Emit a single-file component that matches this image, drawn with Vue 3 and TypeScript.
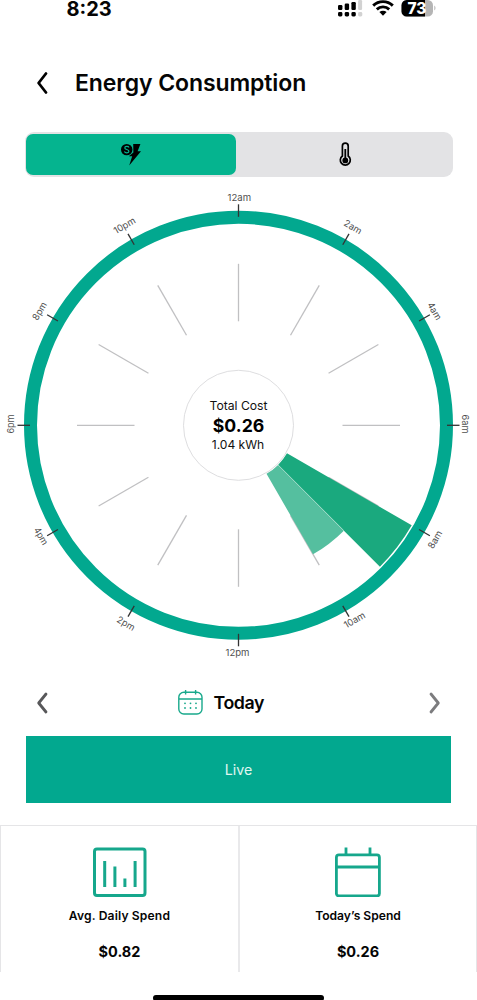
<script setup lang="ts">
interface HourLabel {
  text: string
  x: number
  y: number
  angle: number
  width: number
}

const CX = 238.5
const CY = 425.3

const labels: HourLabel[] = [
  { text: '12am', x: 239.3, y: 197.5, angle: 0, width: 23.5 },
  { text: '2am', x: 353, y: 227, angle: 30, width: 19 },
  { text: '4am', x: 434.5, y: 311, angle: 60, width: 19 },
  { text: '6am', x: 465.5, y: 424, angle: 90, width: 19 },
  { text: '8am', x: 435, y: 539.5, angle: -60, width: 19 },
  { text: '10am', x: 354.5, y: 620, angle: -30, width: 23 },
  { text: '12pm', x: 237.5, y: 652.5, angle: 0, width: 24 },
  { text: '2pm', x: 126, y: 623.5, angle: 30, width: 19 },
  { text: '4pm', x: 41, y: 536, angle: 60, width: 19 },
  { text: '6pm', x: 11, y: 424, angle: -90, width: 19 },
  { text: '8pm', x: 39.5, y: 311, angle: -60, width: 19 },
  { text: '10pm', x: 124.5, y: 225.5, angle: -30, width: 23.5 },
]

const spokes: number[] = Array.from({ length: 12 }, (_, i) => i * 30)

function point(r: number, deg: number): string {
  const a = (deg * Math.PI) / 180
  return `${(CX + r * Math.cos(a)).toFixed(2)} ${(CY + r * Math.sin(a)).toFixed(2)}`
}

function wedge(r0: number, r1: number, a0: number, a1: number): string {
  return `M${point(r0, a0)}L${point(r1, a0)}A${r1} ${r1} 0 0 1 ${point(r1, a1)}L${point(r0, a1)}A${r0} ${r0} 0 0 0 ${point(r0, a0)}Z`
}
</script>

<template>
  <div class="screen">
    <div class="status">
      <span class="time">8:23</span>
      <div class="indicators">
        <svg class="signal" width="25" height="17" viewBox="0 0 25 17">
          <g fill="#000">
            <rect x="0" y="5" width="4.4" height="5" rx="1.2" />
            <rect x="6.7" y="3.5" width="4.4" height="6.5" rx="1.2" />
            <rect x="13.4" y="2" width="4.4" height="8" rx="1.2" />
            <rect x="0" y="12" width="4.4" height="4.4" rx="1.4" />
            <rect x="6.7" y="12" width="4.4" height="4.4" rx="1.4" />
            <rect x="13.4" y="12" width="4.4" height="4.4" rx="1.4" />
          </g>
          <g fill="#d2d2d2">
            <rect x="20.1" y="0" width="4" height="10" rx="1.2" />
            <rect x="20.1" y="12" width="4.2" height="4.4" rx="1.4" />
          </g>
        </svg>
        <svg class="wifi" width="22" height="16" viewBox="0 0 22 16">
          <g fill="none" stroke="#000" stroke-width="2.9">
            <path d="M1.2 5.6A14 14 0 0 1 20.8 5.6" />
            <path d="M4.8 9.4A9 9 0 0 1 17.2 9.4" />
          </g>
          <path d="M7.4 12.1A5.2 5.2 0 0 1 14.6 12.1L11 15.8Z" />
        </svg>
        <svg class="battery" width="36" height="18" viewBox="0 0 36 18">
          <rect x="0.5" y="0" width="31.5" height="16.6" rx="5.2" fill="#b5b5b5" />
          <path d="M5.7 0H24V16.6H5.7A5.2 5.2 0 0 1 .5 11.4V5.2A5.2 5.2 0 0 1 5.7 0Z" />
          <path d="M33.3 5.5A3.2 3.2 0 0 1 33.3 10.5Z" fill="#b5b5b5" />
          <text x="16" y="13.8" text-anchor="middle" textLength="19" lengthAdjust="spacingAndGlyphs">73</text>
        </svg>
      </div>
    </div>

    <header class="header">
      <svg class="chevron" width="12" height="24" viewBox="0 0 12 24">
        <path d="M10 2.5L2.6 12L10 21.5" fill="none" stroke="#000" stroke-width="2.8" stroke-linecap="round" stroke-linejoin="round" />
      </svg>
      <h1 class="title">Energy Consumption</h1>
    </header>

    <div class="tabs">
      <button class="tab active" aria-label="Cost">
        <svg width="20" height="23" viewBox="0 0 20 23">
          <path d="M12.2 1H19.4L16.6 8.2H20L8.2 22.4L11.2 13.2H7.8L12.4 9.6Z" />
          <circle cx="5.7" cy="6.6" r="5.7" />
          <path d="M8 4.5C7.3 2.9 3.8 3 3.8 4.9C3.8 6.9 7.9 6.1 7.9 8.3C7.9 10.3 4.2 10.3 3.4 8.6" fill="none" stroke="#05b48f" stroke-width="1.2" />
        </svg>
      </button>
      <button class="tab temperature" aria-label="Temperature">
        <svg width="13" height="25" viewBox="0 0 13 25">
          <path d="M3.4 14V4A2.9 2.9 0 0 1 9.2 4V14A5 5 0 1 1 3.4 14Z" fill="none" stroke="#000" stroke-width="1.7" />
          <circle cx="6.3" cy="18.4" r="2.9" />
          <path d="M6.3 7V18" stroke="#000" stroke-width="1.8" />
        </svg>
      </button>
    </div>

    <svg class="dial" width="477" height="490" viewBox="0 185 477 490">
      <circle :cx="CX" :cy="CY" r="208" fill="none" stroke="#02a88f" stroke-width="13" />
      <g stroke="#c0c0c2" stroke-width="1.3">
        <line v-for="a in spokes" :key="a" :x1="CX" :x2="CX" :y1="CY - 161.5" :y2="CY - 104" :transform="`rotate(${a} ${CX} ${CY})`" />
      </g>
      <path :d="wedge(56, 149, 45, 60)" fill="#55bf9f" />
      <path :d="wedge(56, 200, 30, 45)" fill="#1aa97e" />
      <path :d="`M${point(56, 45)}L${point(149, 45)}`" stroke="#bfe6d9" stroke-width=".7" />
      <g stroke="#333" stroke-width="1.3">
        <line v-for="a in spokes" :key="a" :x1="CX" :x2="CX" :y1="CY - 221" :y2="CY - 208.5" :transform="`rotate(${a} ${CX} ${CY})`" />
      </g>
      <circle :cx="CX" :cy="CY" r="55" fill="#fff" stroke="#dedee0" stroke-width="1" />
      <g class="hours">
        <text
          v-for="l in labels"
          :key="l.text"
          :x="l.x"
          :y="l.y + 3.3"
          :textLength="l.width"
          lengthAdjust="spacingAndGlyphs"
          :transform="`rotate(${l.angle} ${l.x} ${l.y})`"
        >{{ l.text }}</text>
      </g>
      <g class="total">
        <text x="238.5" y="410.3" textLength="58" lengthAdjust="spacingAndGlyphs">Total Cost</text>
        <text class="cost" x="238.5" y="431.7" textLength="51.5" lengthAdjust="spacingAndGlyphs">$0.26</text>
        <text x="238" y="449" textLength="52.5" lengthAdjust="spacingAndGlyphs">1.04 kWh</text>
      </g>
    </svg>

    <div class="period">
      <svg width="12" height="22" viewBox="0 0 12 22">
        <path d="M10 2L2.7 11L10 20" fill="none" stroke="#58585a" stroke-width="2.8" stroke-linecap="round" stroke-linejoin="round" />
      </svg>
      <div class="current">
        <svg width="25" height="25" viewBox="0 0 25 25">
          <g fill="none" stroke="#19a98c" stroke-width="1.4">
            <rect x=".8" y="2.2" width="23.2" height="21.8" rx="5" />
            <path d="M1 9H24M7.6 0V4.5M17.6 0V4.5" />
          </g>
          <g fill="#19a98c">
            <circle cx="7" cy="13.3" r=".9" /><circle cx="12.5" cy="13.3" r=".9" /><circle cx="18" cy="13.3" r=".9" />
            <circle cx="7" cy="18" r=".9" /><circle cx="12.5" cy="18" r=".9" /><circle cx="18" cy="18" r=".9" />
          </g>
        </svg>
        <span>Today</span>
      </div>
      <svg class="next" width="12" height="22" viewBox="0 0 12 22">
        <path d="M2 2L9.3 11L2 20" fill="none" stroke="#7c7c7e" stroke-width="2.8" stroke-linecap="round" stroke-linejoin="round" />
      </svg>
    </div>

    <button class="live">Live</button>

    <div class="cards">
      <section class="card">
        <svg width="54" height="50" viewBox="0 0 54 50">
          <g fill="none" stroke="#16a78c" stroke-width="3">
            <rect x="1.5" y="2" width="50.5" height="46.5" rx="2.5" />
            <path d="M11.700 14V40M21.900 19.500V40M31.900 31.500V40M42.100 14V40" />
          </g>
        </svg>
        <span class="name avg">Avg. Daily Spend</span>
        <strong class="value">$0.82</strong>
      </section>
      <section class="card">
        <svg width="46" height="50" viewBox="0 0 46 50">
          <g fill="none" stroke="#16a78c" stroke-width="2.8">
            <rect x="1.400" y="7.900" width="43" height="41" rx="2.500" />
            <path d="M1.400 20H44.400M11 .5V8M35 .5V8" />
          </g>
        </svg>
        <span class="name">Today’s Spend</span>
        <strong class="value">$0.26</strong>
      </section>
    </div>

    <div class="home"></div>
  </div>
</template>

<style scoped>
.screen {
  width: 477px;
  height: 1000px;
  box-sizing: border-box;
  display: flex;
  flex-direction: column;
  overflow: hidden;
  background: #fff;
  color: #050505;
  font-family: Inter, "Open Sans", sans-serif;
}
.status {
  height: 50px;
  flex: none;
  display: flex;
  justify-content: space-between;
  padding: 0 40.5px 0 66.5px;
}
.time {
  font-size: 20px;
  line-height: 18px;
  font-weight: 700;
}
.indicators {
  display: flex;
  align-items: flex-start;
}
.wifi { margin-left: 8.5px; }
.battery { margin-left: 7px; }
.battery text {
  font: 800 15.5px Inter, sans-serif;
  fill: #fff;
}
.header {
  height: 66px;
  flex: none;
  display: flex;
  align-items: center;
  padding-left: 36px;
}
.title {
  margin: 0 0 0 27px;
  font-size: 23px;
  line-height: 30px;
  font-weight: 600;
  letter-spacing: -0.1px;
}
.tabs {
  display: flex;
  flex: none;
  box-sizing: border-box;
  height: 45.5px;
  margin: 15.5px 24px 0 24.5px;
  padding: 2px 1.5px;
  border-radius: 9px;
  background: #e3e3e5;
}
.tab {
  flex: 1;
  display: flex;
  align-items: center;
  justify-content: center;
  border: 0;
  padding: 0;
  border-radius: 7px;
  background: transparent;
}
.tab.active {
  flex: 0 0 210px;
  background: #05b48f;
}
.tab.temperature { padding-left: 4px; }
.dial {
  flex: none;
  margin-top: 8px;
  display: block;
}
.hours text {
  font-size: 9.4px;
  text-anchor: middle;
  fill: #505050;
}
.total text {
  font-size: 12.3px;
  text-anchor: middle;
  fill: #111;
}
.total text.cost {
  font-size: 17.5px;
  font-weight: 700;
  fill: #000;
}
.period {
  height: 55px;
  flex: none;
  display: flex;
  align-items: center;
  padding: 0 36px;
}
.current {
  display: flex;
  align-items: center;
  gap: 11px;
  margin-left: 129.5px;
  font-size: 17.8px;
  font-weight: 600;
  letter-spacing: -0.45px;
}
.next { margin-left: auto; }
.live {
  flex: none;
  height: 66.5px;
  margin: 6px 26px 0;
  border: 0;
  padding: 0;
  background: #02a88f;
  color: #e0f7f1;
  font: 400 14.2px Inter, sans-serif;
}
.cards {
  flex: none;
  height: 147px;
  box-sizing: border-box;
  margin-top: 22.5px;
  display: grid;
  grid-template-columns: 239px 1fr;
  border: 1px solid #e5e5e7;
  border-bottom: 0;
}
.card {
  display: flex;
  flex-direction: column;
  align-items: center;
  padding-top: 21px;
}
.card:first-child { border-right: 2px solid #e9e9eb; }
.name {
  margin-top: 10px;
  font-size: 12.1px;
  line-height: 18px;
  font-weight: 600;
}
.name.avg { letter-spacing: 0.15px; }
.value {
  margin-top: 17px;
  font-size: 14.5px;
  line-height: 20px;
  font-weight: 700;
}
.home {
  width: 171px;
  height: 6px;
  flex: none;
  margin: 23px auto 0;
  border-radius: 3px;
  background: #000;
}
</style>
